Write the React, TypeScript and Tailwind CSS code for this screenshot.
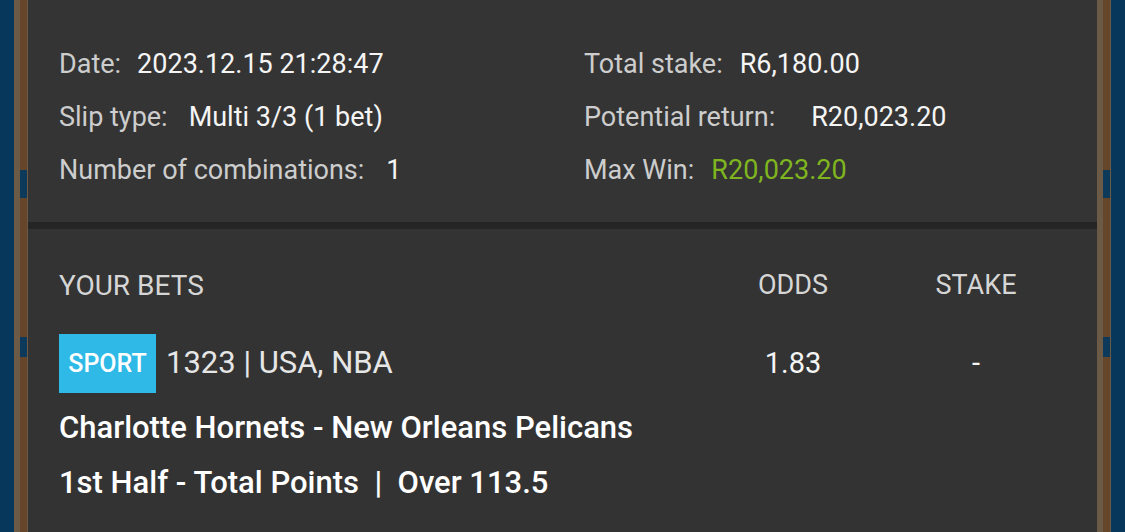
const font = { fontFamily: 'Roboto, "Liberation Sans", sans-serif' };

function Rail({ side }: { side: 'left' | 'right' }) {
  const wood = (
    <div className="flex w-[14px] flex-col bg-[#6b5a45]">
      <div className="ml-[6px] flex h-full w-[7px] flex-col bg-[#66462a]">
        <div className="h-[170px]" />
        <div className="h-[28px] bg-[#0d3a5a]" />
        <div className="h-[139px]" />
        <div className="h-[20px] bg-[#0d3a5a]" />
        <div className="flex-1" />
      </div>
    </div>
  );
  return (
    <div className="flex h-full">
      {side === 'left' && <div className="w-[14px] bg-[#07385c]" />}
      {wood}
      {side === 'right' && <div className="w-[14px] bg-[#07385c]" />}
    </div>
  );
}

function InfoRow({ label, value, gap, green }: { label: string; value: string; gap: string; green?: boolean }) {
  return (
    <div className="flex h-[53px] items-center">
      <span className="text-[#cdcdcd]">{label}</span>
      <span className={`${gap} ${green ? 'text-[#7fb61f]' : 'text-[#f5f5f5]'}`}>{value}</span>
    </div>
  );
}

export default function App() {
  return (
    <div className="flex h-[532px] w-[1125px] overflow-hidden bg-[#07385c]" style={font}>
      <Rail side="left" />
      <div className="flex flex-1 flex-col bg-[#333333]">
        {/* Summary */}
        <div className="flex bg-[#343434] pl-[31px] pt-[38px] pb-[25px] text-[27px]">
          <div className="w-[525px]">
            <InfoRow label="Date:" value="2023.12.15 21:28:47" gap="ml-[16px]" />
            <InfoRow label="Slip type:" value="Multi 3/3 (1 bet)" gap="ml-[21px]" />
            <InfoRow label="Number of combinations:" value="1" gap="ml-[22px]" />
          </div>
          <div>
            <InfoRow label="Total stake:" value="R6,180.00" gap="ml-[17px]" />
            <InfoRow label="Potential return:" value="R20,023.20" gap="ml-[36px]" />
            <InfoRow label="Max Win:" value="R20,023.20" gap="ml-[17px]" green />
          </div>
        </div>
        <div className="h-[7px] bg-[#252525]" />

        {/* Bets */}
        <div className="flex flex-col pl-[31px] pr-[51px] pt-[30px]">
          <div className="flex h-[53px] items-center text-[#d6d6d6]">
            <span className="flex-1 text-[28px]">YOUR BETS</span>
            <span className="w-[140px] text-center text-[27px]">ODDS</span>
            <span className="ml-[43px] w-[140px] text-center text-[27px]">STAKE</span>
          </div>
          <div className="mt-[22px] flex h-[59px] items-center">
            <div className="flex flex-1 items-center">
              <span className="flex h-[59px] w-[97px] items-center justify-center bg-[#2fb9e6] text-[25px] font-medium text-white">
                SPORT
              </span>
              <span className="ml-[10px] text-[31px] text-[#e6e6e6]">1323 | USA, NBA</span>
            </div>
            <span className="w-[140px] text-center text-[29px] text-[#f5f5f5]">1.83</span>
            <span className="ml-[43px] w-[140px] text-center text-[29px] text-[#f5f5f5]">-</span>
          </div>
          <div className="mt-[8px] flex h-[55px] items-center text-[31px] font-medium text-white">
            Charlotte Hornets - New Orleans Pelicans
          </div>
          <div className="flex h-[55px] items-center text-[31px] font-medium text-white">
            1st Half - Total Points&nbsp;&nbsp;|&nbsp;&nbsp;Over 113.5
          </div>
        </div>
      </div>
      <Rail side="right" />
    </div>
  );
}
